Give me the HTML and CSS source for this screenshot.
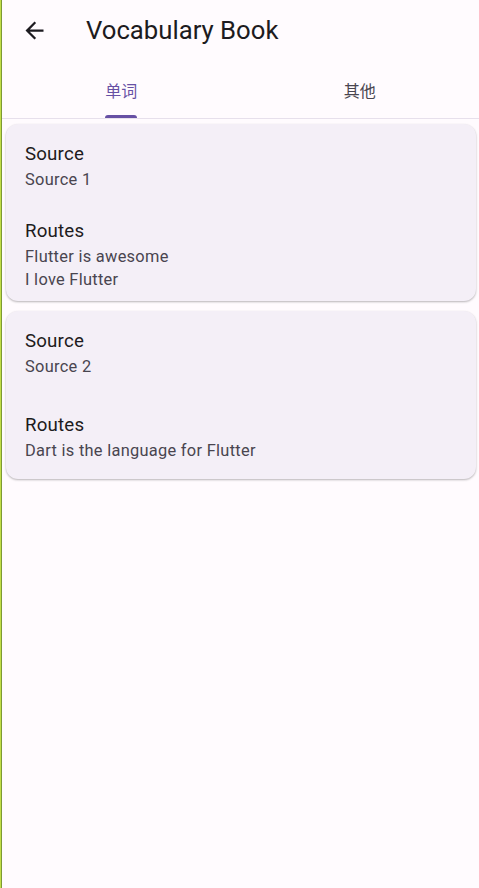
FILE: index.html
```html
<!DOCTYPE html>
<html>
<head>
<meta charset="utf-8">
<link rel="stylesheet" href="styles.css">
</head>
<body>
<div class="edge"></div>
<div class="app">
  <header class="appbar">
    <button class="back" aria-label="Back">
      <svg viewBox="0 0 24 24" width="27" height="27"><path d="M20 11H7.83l5.59-5.59L12 4l-8 8 8 8 1.41-1.41L7.83 13H20v-2z" fill="#1d1b20"/></svg>
    </button>
    <h1 class="title">Vocabulary Book</h1>
  </header>
  <nav class="tabs">
    <div class="tab active"><span class="label">单词<span class="indicator"></span></span></div>
    <div class="tab"><span class="label">其他</span></div>
  </nav>
  <main class="list">
    <section class="card">
      <div class="tile">
        <div class="t-title">Source</div>
        <div class="t-sub">Source 1</div>
      </div>
      <div class="tile tile-3">
        <div class="t-title">Routes</div>
        <div class="t-sub">Flutter is awesome</div>
        <div class="t-sub">I love Flutter</div>
      </div>
    </section>
    <section class="card">
      <div class="tile">
        <div class="t-title">Source</div>
        <div class="t-sub">Source 2</div>
      </div>
      <div class="tile">
        <div class="t-title">Routes</div>
        <div class="t-sub">Dart is the language for Flutter</div>
      </div>
    </section>
  </main>
</div>
</body>
</html>
```

FILE: styles.css
```css
* { box-sizing: border-box; }
html, body {
  margin: 0;
  padding: 0;
  height: 100%;
}
body {
  display: flex;
  background: #fffbfe;
  font-family: Roboto, "Noto Sans CJK SC", sans-serif;
  color: #1d1b20;
  overflow: hidden;
}
.edge {
  width: 2px;
  flex: none;
  background: linear-gradient(to right, #c2de48 0 1px, #7d9a34 1px 2px);
}
.app {
  flex: 1;
  display: flex;
  flex-direction: column;
  min-width: 0;
}
.appbar {
  height: 60px;
  display: flex;
  align-items: center;
}
.back {
  border: 0;
  background: none;
  padding: 0;
  margin-left: 19px;
  width: 27px;
  height: 27px;
  display: flex;
  align-items: center;
  justify-content: center;
}
.back svg { display: block; }
.title {
  margin: 0 0 0 38px;
  font-size: 25.7px;
  font-weight: 400;
  line-height: 32px;
  color: #1d1b20;
  letter-spacing: 0;
}
.tabs {
  height: 59px;
  display: flex;
  border-bottom: 1px solid #e7e0ec;
}
.tab {
  flex: 1;
  display: flex;
  justify-content: center;
  align-items: center;
  font-family: "Noto Sans CJK SC", sans-serif;
  font-size: 16px;
  color: #49454f;
}
.tab.active { color: #6750a4; }
.label {
  position: relative;
  height: 100%;
  display: flex;
  align-items: center;
  padding-top: 2px;
}
.indicator {
  position: absolute;
  left: 0;
  right: 0;
  bottom: 0;
  height: 3px;
  background: #6750a4;
  border-radius: 3px 3px 0 0;
}
.list {
  padding: 5px 3px 0 4px;
  display: flex;
  flex-direction: column;
  gap: 10px;
}
.card {
  background: #f4eff7;
  border-radius: 12px;
  box-shadow: 0 1px 2px rgba(0,0,0,0.22), 0 1px 3px rgba(0,0,0,0.08);
  display: flex;
  flex-direction: column;
}
.tile {
  min-height: 84px;
  padding: 9px 19px;
  display: flex;
  flex-direction: column;
  justify-content: center;
}
.tile-3 { min-height: 92px; }
.t-title {
  font-size: 18.7px;
  line-height: 28px;
  letter-spacing: 0.18px;
  color: #1d1b20;
}
.t-sub {
  font-size: 16.4px;
  line-height: 23.4px;
  letter-spacing: 0.29px;
  color: #49454f;
}
```
